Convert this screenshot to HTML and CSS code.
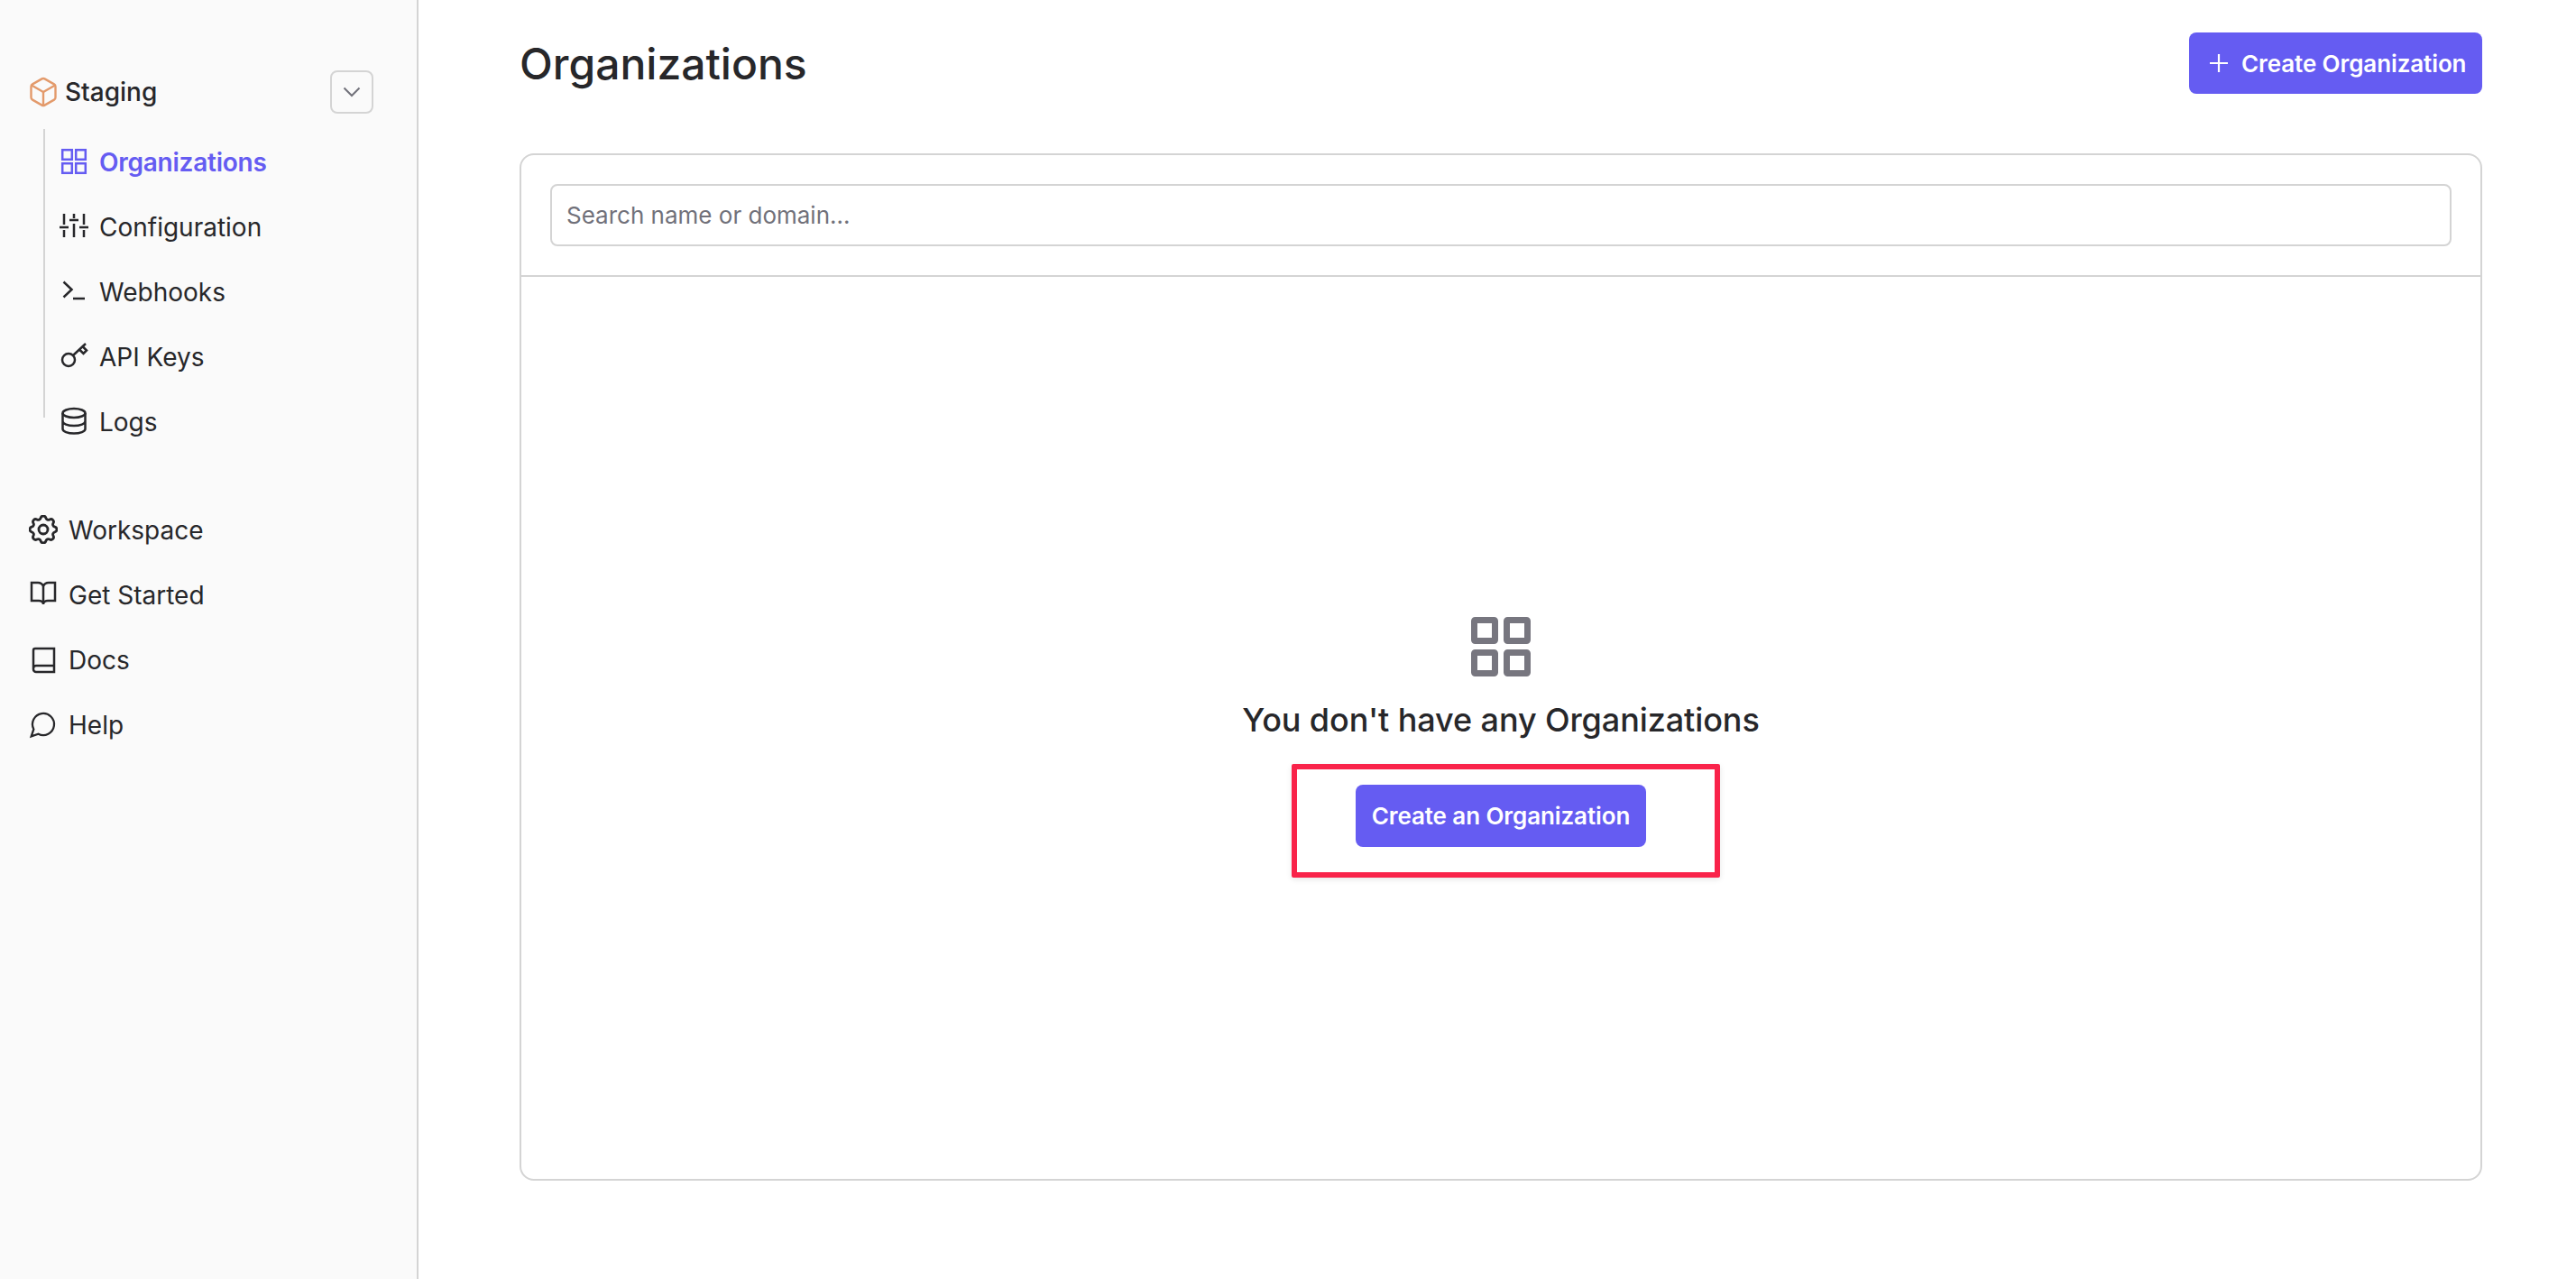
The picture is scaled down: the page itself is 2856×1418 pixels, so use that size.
FILE: index.html
```html
<!DOCTYPE html>
<html lang="en">
<head>
  <meta charset="UTF-8" />
  <title>Organizations</title>
  <link rel="stylesheet" href="styles.css">
</head>
<body>
  <div class="app">
    <aside class="sidebar">
      <div class="env-row">
        <svg class="env-icon" viewBox="0 0 24 24"><path d="M21 8a2 2 0 0 0-1-1.73l-7-4a2 2 0 0 0-2 0l-7 4A2 2 0 0 0 3 8v8a2 2 0 0 0 1 1.73l7 4a2 2 0 0 0 2 0l7-4A2 2 0 0 0 21 16Z"/><path d="m3.3 7 8.7 5 8.700-5"/><path d="M12 22V12"/></svg>
        <span class="env-name">Staging</span>
        <button class="env-toggle">
          <svg viewBox="0 0 24 24"><path d="m3.500 7.500 8.500 8.500 8.500-8.500"/></svg>
        </button>
      </div>

      <nav class="subnav">
        <a class="nav-item active">
          <svg class="nav-icon" viewBox="0 0 32 32"><rect x="3.200" y="3.200" width="10.600" height="10.600"/><rect x="18.200" y="3.200" width="10.600" height="10.600"/><rect x="3.200" y="18.200" width="10.600" height="10.600"/><rect x="18.200" y="18.200" width="10.600" height="10.600"/></svg>
          <span>Organizations</span>
        </a>
        <a class="nav-item">
          <svg class="nav-icon" viewBox="0 0 32 32"><path d="M5 2v12M5 20v8M16 2v5M16 13v15M27 2v12M27 20v8M0 17h10M11 9h10M22 17h10"/></svg>
          <span>Configuration</span>
        </a>
        <a class="nav-item">
          <svg class="nav-icon" viewBox="0 0 32 32"><path d="m4.500 5.500 9 8.500-9 8.500M15 24h13"/></svg>
          <span>Webhooks</span>
        </a>
        <a class="nav-item">
          <svg class="nav-icon" viewBox="0 0 32 32"><circle cx="10" cy="20" r="7"/><path d="m15 15 14-13M22 8.500l4.500 4.500 3.500-3.500-4.500-4.500"/></svg>
          <span>API Keys</span>
        </a>
        <a class="nav-item">
          <svg class="nav-icon" viewBox="0 0 32 32"><ellipse cx="16" cy="7" rx="12.500" ry="5"/><path d="M3.500 7v17.500c0 2.800 5.600 5 12.500 5s12.500-2.200 12.500-5V7M3.500 16c0 2.800 5.600 5 12.500 5s12.500-2.200 12.500-5"/></svg>
          <span>Logs</span>
        </a>
      </nav>

      <nav class="mainnav">
        <a class="nav-item">
          <svg class="nav-icon icon-thin" viewBox="2.400 2.400 19.200 19.200"><path d="M10.325 4.317c.426-1.756 2.924-1.756 3.35 0a1.724 1.724 0 002.573 1.066c1.543-.94 3.31.826 2.37 2.37a1.724 1.724 0 001.065 2.572c1.756.426 1.756 2.924 0 3.35a1.724 1.724 0 00-1.066 2.573c.94 1.543-.826 3.31-2.37 2.37a1.724 1.724 0 00-2.572 1.065c-.426 1.756-2.924 1.756-3.35 0a1.724 1.724 0 00-2.573-1.066c-1.543.94-3.31-.826-2.37-2.37a1.724 1.724 0 00-1.065-2.572c-1.756-.426-1.756-2.924 0-3.35a1.724 1.724 0 001.066-2.573c-.94-1.543.826-3.31 2.37-2.37.996.608 2.296.07 2.572-1.065z"/><circle cx="12" cy="12" r="3"/></svg>
          <span>Workspace</span>
        </a>
        <a class="nav-item">
          <svg class="nav-icon" viewBox="0 0 32 32"><path d="M16 7c-1-2.500-3-4-6-4H3v20h8c2.500 0 5 1.500 5 4 0-2.500 2.500-4 5-4h8V3h-7c-3 0-5 1.500-6 4zM16 7v20"/></svg>
          <span>Get Started</span>
        </a>
        <a class="nav-item">
          <svg class="nav-icon" viewBox="0 0 32 32"><path d="M5 26V6a2 2 0 0 1 2-2h21v26H8a3 3 0 0 1-3-3v-1a3 3 0 0 1 3-3h20"/></svg>
          <span>Docs</span>
        </a>
        <a class="nav-item">
          <svg class="nav-icon icon-thin" viewBox="0 0 24 24"><path d="M7.900 20A9 9 0 1 0 4 16.100L2 22Z"/></svg>
          <span>Help</span>
        </a>
      </nav>
    </aside>

    <main class="content">
      <div class="page-head">
        <h1>Organizations</h1>
        <button class="btn btn-head">
          <svg viewBox="0 0 24 24"><path d="M12 2v20M2 12h20"/></svg>
          Create Organization
        </button>
      </div>

      <section class="card">
        <div class="card-search">
          <input class="search-input" type="text" placeholder="Search name or domain...">
        </div>
        <div class="empty">
          <svg class="empty-icon" viewBox="0 0 66 66"><rect x="3.500" y="3.500" width="23" height="23" rx="1"/><rect x="39.500" y="3.500" width="23" height="23" rx="1"/><rect x="3.500" y="39.500" width="23" height="23" rx="1"/><rect x="39.500" y="39.500" width="23" height="23" rx="1"/></svg>
          <h2>You don't have any Organizations</h2>
          <div class="cta-wrap">
            <button class="btn btn-cta">Create an Organization</button>
            <div class="highlight"></div>
          </div>
        </div>
      </section>
    </main>
  </div>
</body>
</html>
```

FILE: styles.css
```css
* {
  box-sizing: border-box;
}
body {
  margin: 0;
  background: #fff;
  color: #27272a;
  font-family: 'Inter', 'Liberation Sans', sans-serif;
}
svg {
  fill: none;
  stroke: currentColor;
  display: block;
  flex-shrink: 0;
}
.app {
  display: flex;
  height: 1418px;
  overflow: hidden;
}

/* sidebar */
.sidebar {
  width: 464px;
  flex-shrink: 0;
  background: #fafafa;
  border-right: 2px solid #d4d4d4;
  padding-top: 66px;
}
.env-row {
  display: flex;
  align-items: center;
  height: 72px;
  padding: 0 48px 0 30px;
}
.env-icon {
  width: 36px;
  height: 36px;
  color: #e39a6b;
  stroke-width: 1.6;
  stroke-linejoin: round;
}
.env-name {
  font-size: 28px;
  font-weight: 500;
  margin-left: 6px;
}
.env-toggle {
  margin-left: auto;
  width: 48px;
  height: 48px;
  padding: 0;
  display: flex;
  align-items: center;
  justify-content: center;
  background: transparent;
  border: 2px solid #d4d4d4;
  border-radius: 8px;
  color: #71717a;
}
.env-toggle svg {
  width: 24px;
  height: 24px;
  stroke-width: 2;
}
.subnav {
  position: relative;
  margin-top: 5px;
  padding-left: 66px;
}
.subnav::before {
  content: "";
  position: absolute;
  left: 48px;
  top: 0;
  width: 2px;
  height: 320px;
  background: #d4d4d4;
}
.mainnav {
  margin-top: 48px;
  padding-left: 32px;
}
.nav-item {
  display: flex;
  align-items: center;
  gap: 12px;
  height: 72px;
  font-size: 28px;
  color: #27272a;
}
.nav-item span {
  padding-top: 1px;
}
.nav-item.active {
  color: #655cf2;
  font-weight: 600;
  letter-spacing: -0.25px;
}
.nav-icon {
  width: 32px;
  height: 32px;
  stroke-width: 2.5;
}
.icon-thin {
  stroke-width: 1.7;
}

/* main area */
.content {
  flex: 1;
  padding: 36px 104px 0 112px;
}
.page-head {
  display: flex;
  align-items: center;
  justify-content: space-between;
  height: 68px;
  margin-bottom: 66px;
}
.page-head h1 {
  margin: 0;
  font-size: 48px;
  font-weight: 500;
}
.btn {
  display: flex;
  align-items: center;
  justify-content: center;
  background: #655cf2;
  color: #fff;
  border: none;
  border-radius: 8px;
  font-family: inherit;
  font-size: 26px;
  font-weight: 600;
  letter-spacing: -0.1px;
  white-space: nowrap;
}
.btn-head {
  width: 325px;
  height: 68px;
  gap: 13px;
  justify-content: flex-start;
  padding-left: 21px;
}
.btn-head svg {
  width: 24px;
  height: 24px;
  stroke-width: 2.2;
}
.card {
  height: 1139px;
  border: 2px solid #d4d4d4;
  border-radius: 16px;
}
.card-search {
  padding: 32px;
  border-bottom: 2px solid #d4d4d4;
}
.search-input {
  display: block;
  width: 100%;
  height: 69px;
  padding: 0 16px;
  border: 2px solid #d4d4d4;
  border-radius: 8px;
  font-family: inherit;
  font-size: 26px;
  color: #27272a;
}
.search-input::placeholder {
  color: #71717a;
}
.empty {
  display: flex;
  flex-direction: column;
  align-items: center;
  padding-top: 377px;
}
.empty-icon {
  width: 66px;
  height: 66px;
  color: #77767f;
  stroke-width: 7;
}
.empty h2 {
  margin: 26px 0 0;
  font-size: 36px;
  font-weight: 500;
  letter-spacing: -0.1px;
}
.cta-wrap {
  position: relative;
  margin-top: 50px;
}
.btn-cta {
  width: 322px;
  height: 69px;
}
/* red annotation drawn over the screenshot */
.highlight {
  position: absolute;
  left: -71px;
  top: -23px;
  right: -82px;
  bottom: -34px;
  border: 6px solid #f9234a;
  border-radius: 2px;
  box-shadow: 0 2px 6px rgba(0, 0, 0, 0.1);
}
```
